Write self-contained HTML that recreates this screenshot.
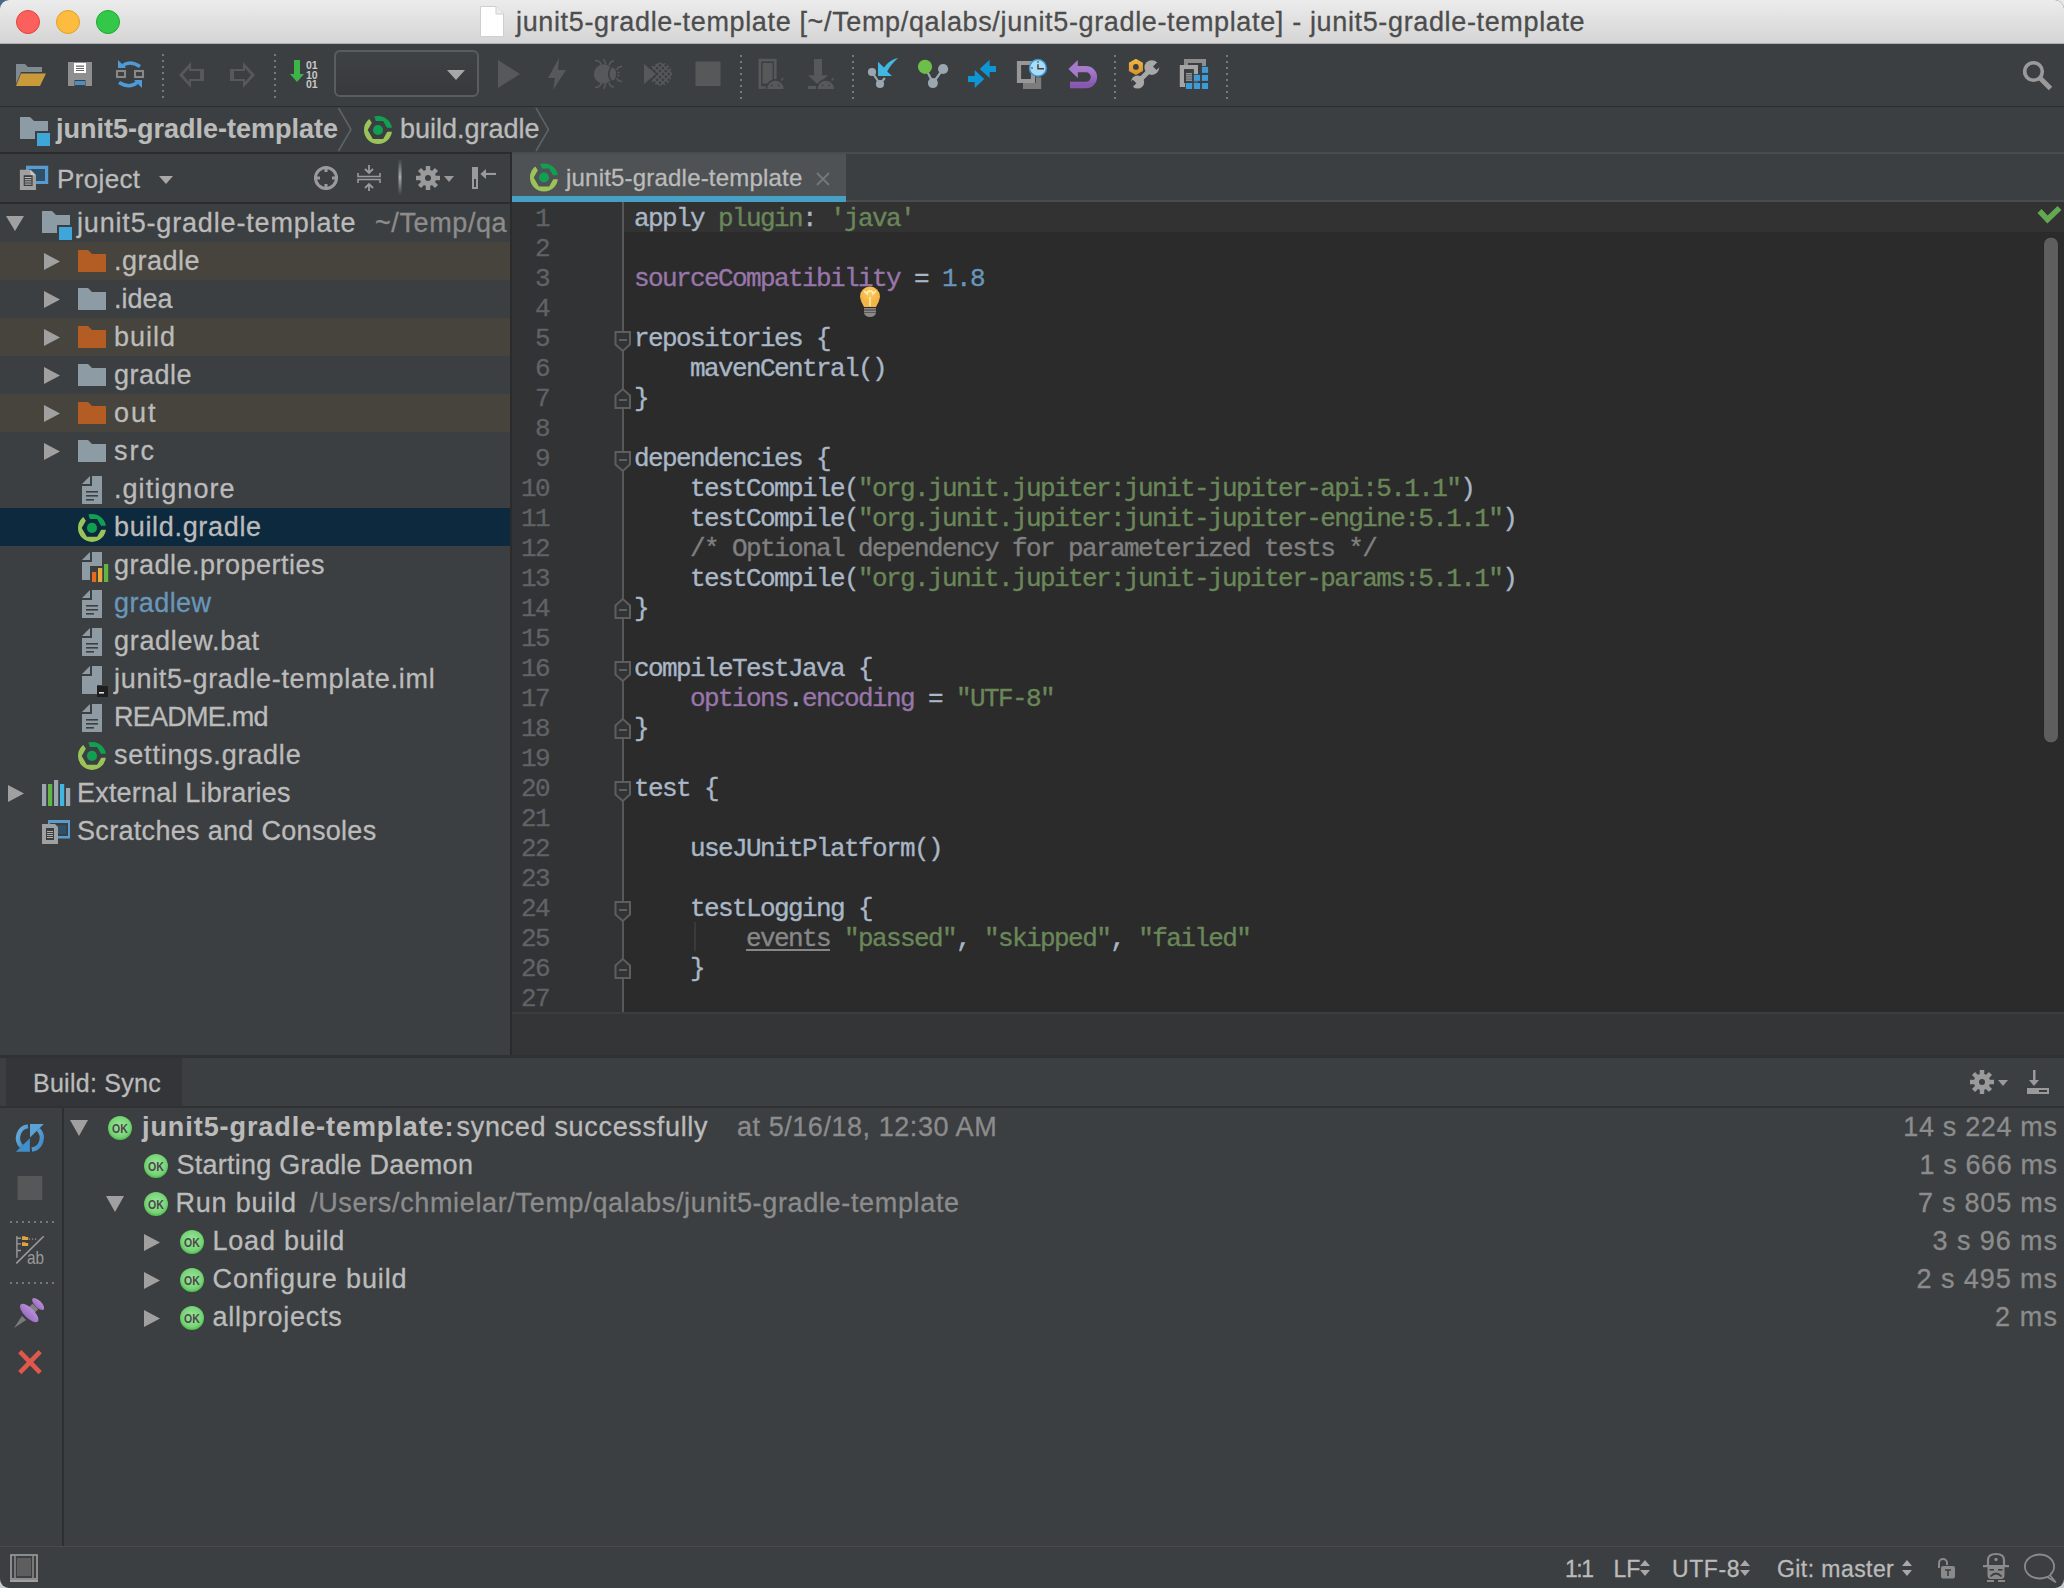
<!DOCTYPE html>
<html><head><meta charset="utf-8"><style>
*{margin:0;padding:0;box-sizing:border-box}
html,body{width:2064px;height:1588px;overflow:hidden;background:#262626}
body{font-family:"Liberation Sans",sans-serif;position:relative}
.a{position:absolute}
.t{position:absolute;white-space:pre;font-size:27px;line-height:38px;color:#bbbbbb;letter-spacing:0.5px;-webkit-text-stroke:0.3px currentColor}
#ov{position:absolute;left:0;top:0;overflow:visible}
.code{position:absolute;font-family:"Liberation Mono",monospace;font-size:26px;letter-spacing:-1.6px;line-height:30px;color:#a9b7c6;white-space:pre;-webkit-text-stroke:0.35px currentColor}
.ln{position:absolute;text-align:right;font-family:"Liberation Mono",monospace;font-size:26px;letter-spacing:-1.6px;line-height:30px;color:#606366;white-space:pre;-webkit-text-stroke:0.3px currentColor}
.s{color:#6a8759}.p{color:#9876aa}.n{color:#6897bb}.c{color:#808080}
.ev{color:#878787;text-decoration:underline;text-decoration-color:#878787;text-underline-offset:3px;text-decoration-thickness:2px}
.dur{position:absolute;white-space:pre;font-size:27px;line-height:38px;color:#8c8c8c;letter-spacing:0.2px;text-align:right;-webkit-text-stroke:0.3px currentColor}
</style></head><body>
<div class="a" style="left:0px;top:0px;width:20px;height:20px;background:#44688e;"></div>
<div class="a" style="left:2044px;top:0px;width:20px;height:20px;background:#e6e6e6;"></div>
<div class="a" style="left:0px;top:1568px;width:20px;height:20px;background:#c6c8ca;"></div>
<div class="a" style="left:2044px;top:1568px;width:20px;height:20px;background:#c6c8ca;"></div>
<div class="a" style="left:0;top:0;width:2064px;height:1588px;background:#3c3f41;border-radius:9px;overflow:hidden">
<div class="a" style="left:0px;top:0px;width:2064px;height:44px;background:linear-gradient(#ececec,#d4d4d4);"></div>
<div class="a" style="left:0px;top:43px;width:2064px;height:1px;background:#b0b0b0;"></div>
<div class="a" style="left:0px;top:106px;width:2064px;height:1px;background:#2b2d2f;"></div>
<div class="a" style="left:0px;top:152px;width:510px;height:2px;background:#2b2b2b;"></div>
<div class="a" style="left:512px;top:152px;width:1552px;height:2px;background:#4a4b4c;"></div>
<div class="a" style="left:0px;top:202px;width:510px;height:2px;background:#2b2b2b;"></div>
<div class="a" style="left:0px;top:242px;width:510px;height:38px;background:#46443c;"></div>
<div class="a" style="left:0px;top:318px;width:510px;height:38px;background:#46443c;"></div>
<div class="a" style="left:0px;top:394px;width:510px;height:38px;background:#46443c;"></div>
<div class="a" style="left:0px;top:508px;width:510px;height:38px;background:#0d293e;"></div>
<div class="a" style="left:510px;top:152px;width:2px;height:904px;background:#2b2b2b;"></div>
<div class="a" style="left:512px;top:154px;width:334px;height:48px;background:#4e5254;"></div>
<div class="a" style="left:512px;top:196px;width:334px;height:6px;background:#46a0c6;"></div>
<div class="a" style="left:846px;top:200px;width:1218px;height:2px;background:#4a4b4c;"></div>
<div class="a" style="left:512px;top:202px;width:1552px;height:810px;background:#2b2b2b;"></div>
<div class="a" style="left:512px;top:202px;width:110px;height:810px;background:#313335;"></div>
<div class="a" style="left:624px;top:202px;width:1440px;height:30px;background:#323232;"></div>
<div class="a" style="left:622px;top:202px;width:2px;height:810px;background:#585858;"></div>
<div class="a" style="left:512px;top:1012px;width:1552px;height:44px;background:#333537;"></div>
<div class="a" style="left:512px;top:1012px;width:1552px;height:2px;background:#3b3d3f;"></div>
<div class="a" style="left:0px;top:1055px;width:2064px;height:3px;background:#2f3133;"></div>
<div class="a" style="left:6px;top:1058px;width:176px;height:48px;background:#333538;"></div>
<div class="a" style="left:0px;top:1106px;width:2064px;height:2px;background:#2f3133;"></div>
<div class="a" style="left:62px;top:1108px;width:2px;height:439px;background:#2d2f31;"></div>
<div class="a" style="left:0px;top:1546px;width:2064px;height:1px;background:#4c4a48;"></div>
</div>
<div class="t" style="left:516px;top:3px;color:#4d4d4d;letter-spacing:0.645px">junit5-gradle-template [~/Temp/qalabs/junit5-gradle-template] - junit5-gradle-template</div>
<div class="t" style="left:56px;top:110px;font-weight:bold;letter-spacing:0;-webkit-text-stroke:0.1px currentColor">junit5-gradle-template</div>
<div class="t" style="left:400px;top:110px;letter-spacing:0">build.gradle</div>
<div class="t" style="left:57px;top:160px;font-size:26px;letter-spacing:0.35px">Project</div>
<div class="t" style="left:77px;top:204px;letter-spacing:0.83px;">junit5-gradle-template</div>
<div class="t" style="left:114px;top:242px;letter-spacing:0.5px;">.gradle</div>
<div class="t" style="left:114px;top:280px;letter-spacing:0.0px;">.idea</div>
<div class="t" style="left:114px;top:318px;letter-spacing:1.0px;">build</div>
<div class="t" style="left:114px;top:356px;letter-spacing:0.5px;">gradle</div>
<div class="t" style="left:114px;top:394px;letter-spacing:2.0px;">out</div>
<div class="t" style="left:114px;top:432px;letter-spacing:2.0px;">src</div>
<div class="t" style="left:114px;top:470px;letter-spacing:1.05px;">.gitignore</div>
<div class="t" style="left:114px;top:508px;letter-spacing:0.68px;">build.gradle</div>
<div class="t" style="left:114px;top:546px;letter-spacing:0.5px;">gradle.properties</div>
<div class="t" style="left:114px;top:584px;letter-spacing:0.4px;color:#6897bb">gradlew</div>
<div class="t" style="left:114px;top:622px;letter-spacing:0.7px;">gradlew.bat</div>
<div class="t" style="left:114px;top:660px;letter-spacing:0.7px;">junit5-gradle-template.iml</div>
<div class="t" style="left:114px;top:698px;letter-spacing:-0.75px;">README.md</div>
<div class="t" style="left:114px;top:736px;letter-spacing:0.79px;">settings.gradle</div>
<div class="t" style="left:77px;top:774px;letter-spacing:0.2px;">External Libraries</div>
<div class="t" style="left:77px;top:812px;letter-spacing:0.31px;">Scratches and Consoles</div>
<div class="t" style="left:375px;top:204px;color:#8c8c8c;letter-spacing:0.6px">~/Temp/qa</div>
<div class="t" style="left:566px;top:159px;font-size:24px;letter-spacing:0.2px">junit5-gradle-template</div>
<div class="t" style="left:33px;top:1064px;font-size:25px;letter-spacing:0.27px">Build: Sync</div>
<div class="t" style="left:142px;top:1108px;font-weight:bold;letter-spacing:0.93px;-webkit-text-stroke:0.1px currentColor">junit5-gradle-template:</div>
<div class="t" style="left:456.5px;top:1108px;letter-spacing:0.69px">synced successfully</div>
<div class="t" style="left:737px;top:1108px;color:#8c8c8c;letter-spacing:0.55px">at 5/16/18, 12:30 AM</div>
<div class="t" style="left:176.5px;top:1146px;letter-spacing:0.25px">Starting Gradle Daemon</div>
<div class="t" style="left:175.5px;top:1184px;letter-spacing:0.8px">Run build</div>
<div class="t" style="left:310px;top:1184px;color:#8c8c8c;letter-spacing:0.66px">/Users/chmielar/Temp/qalabs/junit5-gradle-template</div>
<div class="t" style="left:212.5px;top:1222px;letter-spacing:0.79px">Load build</div>
<div class="t" style="left:212.5px;top:1260px;letter-spacing:0.89px">Configure build</div>
<div class="t" style="left:212.5px;top:1298px;letter-spacing:0.78px">allprojects</div>
<div class="dur" style="right:6.34px;top:1108px;letter-spacing:0.66px">14 s 224 ms</div>
<div class="dur" style="right:6.39px;top:1146px;letter-spacing:0.61px">1 s 666 ms</div>
<div class="dur" style="right:6.22px;top:1184px;letter-spacing:0.78px">7 s 805 ms</div>
<div class="dur" style="right:6.07px;top:1222px;letter-spacing:0.93px">3 s 96 ms</div>
<div class="dur" style="right:6.06px;top:1260px;letter-spacing:0.94px">2 s 495 ms</div>
<div class="dur" style="right:5.83px;top:1298px;letter-spacing:1.17px">2 ms</div>
<div class="t" style="left:1565px;top:1550px;font-size:23px;letter-spacing:-1.5px">1:1</div>
<div class="t" style="left:1613.5px;top:1550px;font-size:23px;letter-spacing:0">LF</div>
<div class="t" style="left:1672px;top:1550px;font-size:23px;letter-spacing:0.6px">UTF-8</div>
<div class="t" style="left:1777px;top:1550px;font-size:23px;letter-spacing:0.43px">Git: master</div>
<div class="code" style="left:634px;top:204px">apply <span class="s">plugin</span>: <span class="s">'java'</span>

<span class="p">sourceCompatibility</span> = <span class="n">1.8</span>

repositories {
    mavenCentral()
}

dependencies {
    testCompile(<span class="s">"org.junit.jupiter:junit-jupiter-api:5.1.1"</span>)
    testCompile(<span class="s">"org.junit.jupiter:junit-jupiter-engine:5.1.1"</span>)
    <span class="c">/* Optional dependency for parameterized tests */</span>
    testCompile(<span class="s">"org.junit.jupiter:junit-jupiter-params:5.1.1"</span>)
}

compileTestJava {
    <span class="p">options</span>.<span class="p">encoding</span> = <span class="s">"UTF-8"</span>
}

test {

    useJUnitPlatform()

    testLogging {
        <span class="ev">events</span> <span class="s">"passed"</span>, <span class="s">"skipped"</span>, <span class="s">"failed"</span>
    }
</div>
<div class="ln" style="left:500px;width:49px;top:204px">1
2
3
4
5
6
7
8
9
10
11
12
13
14
15
16
17
18
19
20
21
22
23
24
25
26
27</div>
<svg id="ov" width="2064" height="1588" viewBox="0 0 2064 1588"><defs>
<radialGradient id="okg" cx="0.5" cy="0.45" r="0.55"><stop offset="0" stop-color="#9ee79e"/><stop offset="0.75" stop-color="#78d478"/><stop offset="1" stop-color="#4fbd4f"/></radialGradient>
<linearGradient id="combog" x1="0" y1="0" x2="0" y2="1"><stop offset="0" stop-color="#3f4244"/><stop offset="1" stop-color="#37393b"/></linearGradient>
<linearGradient id="sepg" x1="0" y1="0" x2="0" y2="1"><stop offset="0" stop-color="#3c3f41"/><stop offset="0.5" stop-color="#a8a8a8"/><stop offset="1" stop-color="#3c3f41"/></linearGradient>
<linearGradient id="revg" x1="0" y1="0" x2="0" y2="1"><stop offset="0" stop-color="#a87ccc"/><stop offset="1" stop-color="#8858b0"/></linearGradient><linearGradient id="nutg" x1="0" y1="0" x2="0" y2="1"><stop offset="0" stop-color="#f0b848"/><stop offset="1" stop-color="#d8922a"/></linearGradient><linearGradient id="refg" x1="0" y1="0" x2="1" y2="1"><stop offset="0" stop-color="#6aaedc"/><stop offset="1" stop-color="#3a86c6"/></linearGradient><linearGradient id="ping" x1="0" y1="0" x2="0" y2="1"><stop offset="0" stop-color="#b88fd6"/><stop offset="1" stop-color="#9c6cc4"/></linearGradient><radialGradient id="bulbg" cx="0.5" cy="0.3" r="0.7"><stop offset="0" stop-color="#fcd060"/><stop offset="1" stop-color="#f0a83a"/></radialGradient>
</defs><path d="M480.5,6.5 H496 L503.5,14 V36.5 H480.5 Z" fill="#fff" stroke="#cfcfcf" stroke-width="1"/><path d="M496,6.5 V14 H503.5" fill="#eee" stroke="#cfcfcf" stroke-width="1"/><circle cx="28" cy="22" r="11.5" fill="#fc605c" stroke="#e0443e" stroke-width="1"/><circle cx="68" cy="22" r="11.5" fill="#fdbc40" stroke="#dea123" stroke-width="1"/><circle cx="108" cy="22" r="11.5" fill="#34c84a" stroke="#1aab29" stroke-width="1"/><path d="M16,64 H25 L28,67 H42 V72 H21 L16,84 Z" fill="#7f8b91"/><path d="M21,73.5 H46 L40,86 H16 Z" fill="#c99a3a"/><rect x="68" y="62" width="24" height="24" fill="#8f8f8f"/><rect x="74" y="63" width="12" height="10" fill="#ffffff"/><rect x="76" y="65.5" width="8" height="1.3" fill="#666"/><rect x="76" y="68" width="8" height="1" fill="#666"/><rect x="76" y="70" width="8" height="1" fill="#666"/><rect x="74.5" y="80" width="11" height="6" fill="#3c3f41"/><rect x="75" y="81" width="10" height="4" fill="#4a90c8"/><rect x="117" y="71" width="8" height="6" fill="none" stroke="#888" stroke-width="2.1"/><rect x="135" y="71" width="8" height="6" fill="none" stroke="#888" stroke-width="2.1"/><path d="M123,65.5 Q130,60 140,66.5" fill="none" stroke="#4f9ad8" stroke-width="3.6"/><path d="M118,60 V68 H126 Z" fill="#4f9ad8"/><path d="M119,82.5 Q130,89 137,82.5" fill="none" stroke="#4f9ad8" stroke-width="3.6"/><path d="M142,88 V80 H134 Z" fill="#4f9ad8"/><rect x="162" y="54" width="2" height="2" fill="#76787a"/><rect x="162" y="60" width="2" height="2" fill="#76787a"/><rect x="162" y="66" width="2" height="2" fill="#76787a"/><rect x="162" y="72" width="2" height="2" fill="#76787a"/><rect x="162" y="78" width="2" height="2" fill="#76787a"/><rect x="162" y="84" width="2" height="2" fill="#76787a"/><rect x="162" y="90" width="2" height="2" fill="#76787a"/><rect x="162" y="96" width="2" height="2" fill="#76787a"/><path d="M191,62 L179,75 L191,88 V81 H204 V69 H191 Z M189,68 V71 H200 V79 H189 V82 L183,75 Z" fill="#565859" fill-rule="evenodd"/><path d="M243,62 L255,75 L243,88 V81 H230 V69 H243 Z M245,68 V71 H234 V79 H245 V82 L251,75 Z" fill="#565859" fill-rule="evenodd"/><rect x="274" y="54" width="2" height="2" fill="#76787a"/><rect x="274" y="60" width="2" height="2" fill="#76787a"/><rect x="274" y="66" width="2" height="2" fill="#76787a"/><rect x="274" y="72" width="2" height="2" fill="#76787a"/><rect x="274" y="78" width="2" height="2" fill="#76787a"/><rect x="274" y="84" width="2" height="2" fill="#76787a"/><rect x="274" y="90" width="2" height="2" fill="#76787a"/><rect x="274" y="96" width="2" height="2" fill="#76787a"/><rect x="294" y="60" width="6" height="14" fill="#3cb44a"/><path d="M290,74 H304 L297,82 Z" fill="#3cb44a"/><text font-family="Liberation Sans" font-weight="bold" font-size="10.5" fill="#c8c8c8"><tspan x="306" y="69">01</tspan><tspan x="306" y="79">10</tspan><tspan x="306" y="88">01</tspan></text><rect x="335" y="51" width="143" height="45" rx="5" fill="url(#combog)" stroke="#5a5d5f" stroke-width="2"/><path d="M447,70 H465 L456,80 Z" fill="#a8a8a8"/><path d="M498,60 L520,74 L498,88 Z" fill="#565859"/><path d="M559,58 L548,78 H555 L553,90 L566,70 H558 Z" fill="#565859"/><circle cx="603.5" cy="74" r="9.7" fill="#565859"/><ellipse cx="612.5" cy="74" rx="4.6" ry="7.6" fill="#3c3f41"/><ellipse cx="612.9" cy="74" rx="3.2" ry="6.3" fill="#565859"/><path d="M595,60.5 Q600,60.5 601.5,65 M603.5,59 L606,64.5 M614,61 Q610,61 609,65.5 M595,87.5 Q600,87.5 601.5,83 M603.5,89 L606,83.5 M614,87 Q610,87 609,82.5 M622,66.5 Q617.5,66.5 617,70 M622,81.5 Q617.5,81.5 617,78 M617.5,72.5 H619.5 M617.5,75.5 H619.5" stroke="#565859" stroke-width="1.7" fill="none"/><path d="M644,64 L655.2,74 L644,84 Z" fill="#565859"/><clipPath id="covc"><circle cx="660.5" cy="74" r="11.5"/></clipPath><g clip-path="url(#covc)" stroke="#565859" stroke-width="1.6"><path d="M613.2,62 L637.2,86 M637.2,62 L613.2,86"/><path d="M619.0,62 L643.0,86 M643.0,62 L619.0,86"/><path d="M624.8,62 L648.8,86 M648.8,62 L624.8,86"/><path d="M630.6,62 L654.6,86 M654.6,62 L630.6,86"/><path d="M636.4,62 L660.4,86 M660.4,62 L636.4,86"/><path d="M642.2,62 L666.2,86 M666.2,62 L642.2,86"/><path d="M648.0,62 L672.0,86 M672.0,62 L648.0,86"/><path d="M653.8,62 L677.8,86 M677.8,62 L653.8,86"/><path d="M659.6,62 L683.6,86 M683.6,62 L659.6,86"/><path d="M665.4,62 L689.4,86 M689.4,62 L665.4,86"/><path d="M671.2,62 L695.2,86 M695.2,62 L671.2,86"/><path d="M677.0,62 L701.0,86 M701.0,62 L677.0,86"/><path d="M682.8,62 L706.8,86 M706.8,62 L682.8,86"/></g><path d="M644,62 L657,74 L644,86" fill="none" stroke="#3c3f41" stroke-width="1.5"/><path d="M644,64 L655.2,74 L644,84 Z" fill="#565859"/><rect x="695.5" y="61.5" width="25" height="24.5" fill="#565859"/><rect x="740" y="55" width="2" height="2" fill="#76787a"/><rect x="740" y="61" width="2" height="2" fill="#76787a"/><rect x="740" y="67" width="2" height="2" fill="#76787a"/><rect x="740" y="73" width="2" height="2" fill="#76787a"/><rect x="740" y="79" width="2" height="2" fill="#76787a"/><rect x="740" y="85" width="2" height="2" fill="#76787a"/><rect x="740" y="91" width="2" height="2" fill="#76787a"/><rect x="740" y="97" width="2" height="2" fill="#76787a"/><rect x="759.8" y="60.1" width="15.5" height="27.5" fill="none" stroke="#565859" stroke-width="2.6"/><rect x="762.6" y="63" width="10" height="20.5" fill="#565859"/><path d="M765.5,89 A9.9,9.9 0 0 1 785.3,89 Z" fill="#3c3f41"/><path d="M767.2,89 A8.2,8.2 0 0 1 783.6,89 Z" fill="#565859"/><path d="M769.5,80.5 L767.5,78 M781.2,80.5 L783.2,78" stroke="#565859" stroke-width="1.5"/><circle cx="772.2" cy="85.4" r="0.8" fill="#3c3f41"/><circle cx="778.7" cy="85.4" r="0.8" fill="#3c3f41"/><rect x="814" y="59" width="8" height="16.5" fill="#565859"/><path d="M807.8,75.2 H827.8 L818,84.5 Z" fill="#565859"/><rect x="807.8" y="86" width="8.2" height="3" fill="#565859"/><path d="M815.9,89 A9.9,9.9 0 0 1 835.7,89 Z" fill="#3c3f41"/><path d="M817.6,89 A8.2,8.2 0 0 1 834,89 Z" fill="#565859"/><path d="M819.9,80.5 L817.9,78 M831.6,80.5 L833.6,78" stroke="#565859" stroke-width="1.5"/><circle cx="822.6" cy="85.4" r="0.8" fill="#3c3f41"/><circle cx="829.1" cy="85.4" r="0.8" fill="#3c3f41"/><rect x="852" y="55" width="2" height="2" fill="#76787a"/><rect x="852" y="61" width="2" height="2" fill="#76787a"/><rect x="852" y="67" width="2" height="2" fill="#76787a"/><rect x="852" y="73" width="2" height="2" fill="#76787a"/><rect x="852" y="79" width="2" height="2" fill="#76787a"/><rect x="852" y="85" width="2" height="2" fill="#76787a"/><rect x="852" y="91" width="2" height="2" fill="#76787a"/><rect x="852" y="97" width="2" height="2" fill="#76787a"/><path d="M872,72 L880,84 L884.8,78" stroke="#9aa7b0" stroke-width="2.2" fill="none"/><circle cx="872" cy="72" r="4.1" fill="#9aa7b0"/><circle cx="880" cy="84" r="4.1" fill="#9aa7b0"/><path d="M878,61.8 L884,67.6 C888,62.5 892,59 898,58 C893.5,62 889.5,67 887.2,71.6 L892,76.1 L878,76.1 Z" fill="#40b6e0"/><path d="M925,67 L933,83 L943,69" stroke="#9aa7b0" stroke-width="2.2" fill="none"/><circle cx="925" cy="66.8" r="7.1" fill="#6cc04a"/><circle cx="943.1" cy="69" r="5.1" fill="#9aa7b0"/><circle cx="932.9" cy="83.1" r="5" fill="#9aa7b0"/><path d="M968,76.1 H974.7 V70 L984.2,79 L974.7,88 V81.9 H968 Z" fill="#0e96d4"/><path d="M996,65.9 H989.6 V59.8 L979.7,69 L989.6,78.1 V72 H996 Z" fill="#0e96d4"/><path d="M1023,83 V89 H1041.2 V77.3 H1036 V83 Z" fill="#7c7c7c"/><path d="M1016.9,61 H1035.1 V83 H1016.9 Z M1021.1,65.1 V78.9 H1030.9 V65.1 Z" fill="#989898" fill-rule="evenodd"/><circle cx="1037.9" cy="67.9" r="8.4" fill="#a9dcf7" stroke="#3e96cf" stroke-width="1.5"/><path d="M1038,64.3 V68.7 H1044" stroke="#4a3f3a" stroke-width="1.5" fill="none"/><rect x="1037.3" y="61.3" width="1.4" height="1.4" fill="#4a3f3a"/><rect x="1031.3" y="67.3" width="1.4" height="1.4" fill="#4a3f3a"/><path d="M1077,69.1 H1086 A7.95,7.95 0 0 1 1086,85 H1070" fill="none" stroke="url(#revg)" stroke-width="6.3"/><path d="M1068.4,69 L1077.8,60.1 V78 Z" fill="#a57acb"/><rect x="1114" y="55" width="2" height="2" fill="#76787a"/><rect x="1114" y="61" width="2" height="2" fill="#76787a"/><rect x="1114" y="67" width="2" height="2" fill="#76787a"/><rect x="1114" y="73" width="2" height="2" fill="#76787a"/><rect x="1114" y="79" width="2" height="2" fill="#76787a"/><rect x="1114" y="85" width="2" height="2" fill="#76787a"/><rect x="1114" y="91" width="2" height="2" fill="#76787a"/><rect x="1114" y="97" width="2" height="2" fill="#76787a"/><path d="M1139,81 L1151,69" stroke="#a8a8a8" stroke-width="4.6"/><circle cx="1151.8" cy="67.6" r="7.4" fill="#a8a8a8"/><circle cx="1137.6" cy="82" r="6.6" fill="#a8a8a8"/><path d="M1153,66.4 L1159.5,59.9 L1163,63.4 L1156.5,69.9 Z" fill="#3c3f41" transform="rotate(0)"/><path d="M1136.4,83.2 L1129.9,89.7 L1126.4,86.2 L1132.9,79.7 Z" fill="#3c3f41"/><path d="M1151,61 L1157.5,67.5" stroke="#a8a8a8" stroke-width="0"/><polygon points="1135.9,58.8 1142.9,62.85 1142.9,70.95 1135.9,75 1128.9,70.95 1128.9,62.85" fill="url(#nutg)"/><circle cx="1135.9" cy="66.9" r="2.9" fill="#3c3f41"/><path d="M1184,59 H1206 V67 H1202 V63 H1188 V65 H1184 Z" fill="#8e8e8e"/><path d="M1179.8,65 H1198 V87.1 H1179.8 Z M1184,69.2 V82.9 H1193.8 V69.2 Z" fill="#a5a5a5" fill-rule="evenodd"/><rect x="1184.2" y="69.2" width="9.4" height="13.3" fill="#3c3f41"/><rect x="1186" y="73.3" width="6" height="1" fill="#c0c0c0"/><rect x="1186" y="75.4" width="6" height="1" fill="#c0c0c0"/><rect x="1186" y="77.5" width="6" height="1" fill="#c0c0c0"/><rect x="1186" y="79.6" width="6" height="1" fill="#c0c0c0"/><rect x="1201.1000000000001" y="66.10000000000001" width="7.8" height="7.6" fill="#3c3f41"/><rect x="1201.9" y="66.9" width="6.2" height="6" fill="#3e9bd8"/><rect x="1193.1000000000001" y="74.10000000000001" width="7.8" height="7.6" fill="#3c3f41"/><rect x="1193.9" y="74.9" width="6.2" height="6" fill="#3e9bd8"/><rect x="1201.1000000000001" y="74.10000000000001" width="7.8" height="7.6" fill="#3c3f41"/><rect x="1201.9" y="74.9" width="6.2" height="6" fill="#3e9bd8"/><rect x="1185.1000000000001" y="82.2" width="7.8" height="7.6" fill="#3c3f41"/><rect x="1185.9" y="83" width="6.2" height="6" fill="#3e9bd8"/><rect x="1193.1000000000001" y="82.2" width="7.8" height="7.6" fill="#3c3f41"/><rect x="1193.9" y="83" width="6.2" height="6" fill="#3e9bd8"/><rect x="1201.1000000000001" y="82.2" width="7.8" height="7.6" fill="#3c3f41"/><rect x="1201.9" y="83" width="6.2" height="6" fill="#3e9bd8"/><rect x="1226" y="55" width="2" height="2" fill="#76787a"/><rect x="1226" y="61" width="2" height="2" fill="#76787a"/><rect x="1226" y="67" width="2" height="2" fill="#76787a"/><rect x="1226" y="73" width="2" height="2" fill="#76787a"/><rect x="1226" y="79" width="2" height="2" fill="#76787a"/><rect x="1226" y="85" width="2" height="2" fill="#76787a"/><rect x="1226" y="91" width="2" height="2" fill="#76787a"/><rect x="1226" y="97" width="2" height="2" fill="#76787a"/><circle cx="2033.5" cy="71.5" r="8.8" fill="none" stroke="#9a9a9a" stroke-width="3.6"/><path d="M2040,78 L2050.5,88.5" stroke="#9a9a9a" stroke-width="5"/><path d="M20,117 H30 L34,121 H48 V139 H20 Z" fill="#8d9ba4"/><rect x="35" y="131" width="15" height="15" fill="#3c3f41"/><rect x="37" y="133" width="13" height="13" fill="#3ea6d9"/><path d="M338.5,108 L351,129.5 L338.5,151" fill="none" stroke="#5f6264" stroke-width="1.6"/><clipPath id="gcl1"><path d="M364,130 A14,14 0 1 0 392,130 A14,14 0 1 0 364,130 Z M388.30,130.00 L383.15,138.92 L372.85,138.92 L367.70,130.00 L372.85,121.08 L383.15,121.08 Z" clip-rule="evenodd"/></clipPath><g clip-path="url(#gcl1)"><polygon points="378.00,127.85 371.94,108.85 378.00,108.00 393.56,114.44 399.67,126.18 400.00,127.85" fill="#11a052"/><polygon points="378.00,131.80 400.00,131.80 393.56,145.56 378.00,152.00 362.44,145.56 356.00,130.00 364.76,112.43" fill="#9ac45a"/></g><circle cx="378" cy="130" r="5.03" fill="#11a052"/><path d="M536,108 L548.5,129.5 L536,151" fill="none" stroke="#5f6264" stroke-width="1.6"/><rect x="26" y="165.7" width="22.2" height="18.3" fill="#5a9bcf"/><rect x="29" y="169" width="16" height="12" fill="#2e5068"/><path d="M19.9,169.8 H30.5 L36,175.3 V190.1 H19.9 Z" fill="#a0a0a0"/><path d="M30.5,169.8 V175.3 H36" fill="#c8c8c8"/><rect x="23.7" y="175.2" width="8.9" height="10.8" fill="#3c3f41"/><rect x="24.8" y="177" width="6.7" height="1" fill="#bdbdbd"/><rect x="24.8" y="179.2" width="6.7" height="1" fill="#bdbdbd"/><rect x="24.8" y="181.4" width="6.7" height="1" fill="#bdbdbd"/><rect x="24.8" y="183.6" width="6.7" height="1" fill="#bdbdbd"/><path d="M159,176 H173 L166,184 Z" fill="#a8a8a8"/><circle cx="326" cy="178" r="10.5" fill="none" stroke="#9a9a9a" stroke-width="3"/><rect x="324.5" y="166" width="3" height="6" fill="#9a9a9a"/><rect x="324.5" y="184" width="3" height="6" fill="#9a9a9a"/><rect x="314" y="176.5" width="6" height="3" fill="#9a9a9a"/><rect x="332" y="176.5" width="6" height="3" fill="#9a9a9a"/><path d="M358,173 V176.5 H380 V173 M358,183 V179.5 H380 V183" fill="none" stroke="#9a9a9a" stroke-width="1.6"/><path d="M369,165 V172 M365,169 L369,173 L373,169 M369,191 V184 M365,188 L369,184 L373,188" fill="none" stroke="#9a9a9a" stroke-width="1.8"/><rect x="398.5" y="159" width="3" height="36" fill="url(#sepg)"/><rect x="425.8" y="166" width="4.4" height="12" fill="#9a9a9a" transform="rotate(0 428 178)"/><rect x="425.8" y="166" width="4.4" height="12" fill="#9a9a9a" transform="rotate(45 428 178)"/><rect x="425.8" y="166" width="4.4" height="12" fill="#9a9a9a" transform="rotate(90 428 178)"/><rect x="425.8" y="166" width="4.4" height="12" fill="#9a9a9a" transform="rotate(135 428 178)"/><rect x="425.8" y="166" width="4.4" height="12" fill="#9a9a9a" transform="rotate(180 428 178)"/><rect x="425.8" y="166" width="4.4" height="12" fill="#9a9a9a" transform="rotate(225 428 178)"/><rect x="425.8" y="166" width="4.4" height="12" fill="#9a9a9a" transform="rotate(270 428 178)"/><rect x="425.8" y="166" width="4.4" height="12" fill="#9a9a9a" transform="rotate(315 428 178)"/><circle cx="428" cy="178" r="8.16" fill="#9a9a9a"/><circle cx="428" cy="178" r="3.0" fill="#3c3f41"/><path d="M444,176 H454 L449,182 Z" fill="#9a9a9a"/><rect x="472" y="167" width="6" height="22" fill="#9a9a9a"/><rect x="474" y="179" width="2" height="8" fill="#3c3f41"/><path d="M480.4,173.9 L486,168.9 V179 Z" fill="#9a9a9a"/><rect x="485" y="172.9" width="11" height="2.1" fill="#9a9a9a"/><path d="M6,216 H24 L15.0,231 Z" fill="#a0a0a0"/><path d="M42,211 H52 L56,215 H70 V233 H42 Z" fill="#8d9ba4"/><rect x="57" y="225" width="15" height="15" fill="#3c3f41"/><rect x="59" y="227" width="13" height="13" fill="#3ea6d9"/><path d="M44,253 L60,261.5 L44,270 Z" fill="#a0a0a0"/><path d="M78,250 H88 L92,254 H106 V272 H78 Z" fill="#b35c24"/><path d="M44,291 L60,299.5 L44,308 Z" fill="#a0a0a0"/><path d="M78,288 H88 L92,292 H106 V310 H78 Z" fill="#8d9ba4"/><path d="M44,329 L60,337.5 L44,346 Z" fill="#a0a0a0"/><path d="M78,326 H88 L92,330 H106 V348 H78 Z" fill="#b35c24"/><path d="M44,367 L60,375.5 L44,384 Z" fill="#a0a0a0"/><path d="M78,364 H88 L92,368 H106 V386 H78 Z" fill="#8d9ba4"/><path d="M44,405 L60,413.5 L44,422 Z" fill="#a0a0a0"/><path d="M78,402 H88 L92,406 H106 V424 H78 Z" fill="#b35c24"/><path d="M44,443 L60,451.5 L44,460 Z" fill="#a0a0a0"/><path d="M78,440 H88 L92,444 H106 V462 H78 Z" fill="#8d9ba4"/><path d="M92,476 H102 V504 H82 V486 H92 Z" fill="#8f9ba3"/><path d="M82,484 L90,476 V484 Z" fill="#8f9ba3"/><rect x="86" y="491" width="12" height="1.6" fill="#3c3f41"/><rect x="86" y="495" width="12" height="1.6" fill="#3c3f41"/><rect x="86" y="499" width="8" height="1.6" fill="#3c3f41"/><clipPath id="gcl2"><path d="M78,527.9 A14,14 0 1 0 106,527.9 A14,14 0 1 0 78,527.9 Z M102.30,527.90 L97.15,536.82 L86.85,536.82 L81.70,527.90 L86.85,518.98 L97.15,518.98 Z" clip-rule="evenodd"/></clipPath><g clip-path="url(#gcl2)"><polygon points="92.00,525.75 85.94,506.75 92.00,505.90 107.56,512.34 113.67,524.08 114.00,525.75" fill="#11a052"/><polygon points="92.00,529.70 114.00,529.70 107.56,543.46 92.00,549.90 76.44,543.46 70.00,527.90 78.76,510.33" fill="#9ac45a"/></g><circle cx="92" cy="527.9" r="5.03" fill="#11a052"/><path d="M92,552 H102 V566 H90 V580 H82 V562 H92 Z" fill="#8f9ba3"/><path d="M82,560 L90,552 V560 Z" fill="#8f9ba3"/><rect x="92" y="572" width="4.2" height="10" fill="#e46c1c"/><rect x="98" y="568" width="4.2" height="14" fill="#e8a838"/><rect x="104" y="564" width="4.2" height="18" fill="#62b543"/><path d="M92,590 H102 V618 H82 V600 H92 Z" fill="#8f9ba3"/><path d="M82,598 L90,590 V598 Z" fill="#8f9ba3"/><rect x="86" y="605" width="12" height="1.6" fill="#3c3f41"/><rect x="86" y="609" width="12" height="1.6" fill="#3c3f41"/><rect x="86" y="613" width="8" height="1.6" fill="#3c3f41"/><path d="M92,628 H102 V656 H82 V638 H92 Z" fill="#8f9ba3"/><path d="M82,636 L90,628 V636 Z" fill="#8f9ba3"/><rect x="86" y="643" width="12" height="1.6" fill="#3c3f41"/><rect x="86" y="647" width="12" height="1.6" fill="#3c3f41"/><rect x="86" y="651" width="8" height="1.6" fill="#3c3f41"/><path d="M92,666 H102 V685 H97 V694 H82 V676 H92 Z" fill="#8f9ba3"/><path d="M82,674 L90,666 V674 Z" fill="#8f9ba3"/><rect x="97" y="686" width="11" height="11" fill="#1e1e1e"/><rect x="99" y="692" width="5" height="1.6" fill="#ddd"/><path d="M92,704 H102 V732 H82 V714 H92 Z" fill="#8f9ba3"/><path d="M82,712 L90,704 V712 Z" fill="#8f9ba3"/><rect x="86" y="719" width="12" height="1.6" fill="#3c3f41"/><rect x="86" y="723" width="12" height="1.6" fill="#3c3f41"/><rect x="86" y="727" width="8" height="1.6" fill="#3c3f41"/><clipPath id="gcl3"><path d="M78,755.9 A14,14 0 1 0 106,755.9 A14,14 0 1 0 78,755.9 Z M102.30,755.90 L97.15,764.82 L86.85,764.82 L81.70,755.90 L86.85,746.98 L97.15,746.98 Z" clip-rule="evenodd"/></clipPath><g clip-path="url(#gcl3)"><polygon points="92.00,753.75 85.94,734.75 92.00,733.90 107.56,740.34 113.67,752.08 114.00,753.75" fill="#11a052"/><polygon points="92.00,757.70 114.00,757.70 107.56,771.46 92.00,777.90 76.44,771.46 70.00,755.90 78.76,738.33" fill="#9ac45a"/></g><circle cx="92" cy="755.9" r="5.03" fill="#11a052"/><path d="M8,785 L24,793.5 L8,802 Z" fill="#a0a0a0"/><rect x="42" y="784" width="4.2" height="22" fill="#9aa7b0"/><rect x="48" y="784" width="4.2" height="22" fill="#62b543"/><rect x="54" y="780" width="4.2" height="26" fill="#9aa7b0"/><rect x="60" y="784" width="4.2" height="22" fill="#40b6e0"/><rect x="66" y="788" width="4.2" height="18" fill="#9aa7b0"/><rect x="48" y="820" width="22" height="18.5" fill="#5a9bcf"/><rect x="50" y="823" width="18" height="13" fill="#3c3f41"/><rect x="58" y="825.5" width="8" height="8.5" fill="#2e5068"/><path d="M42,824 H55 L58,827 V844 H42 Z" fill="#a0a0a0"/><rect x="46" y="828" width="8" height="12" fill="#3c3f41"/><rect x="47" y="831" width="6" height="0.9" fill="#bbb"/><rect x="47" y="833" width="6" height="0.9" fill="#bbb"/><rect x="47" y="835" width="6" height="0.9" fill="#bbb"/><rect x="47" y="837" width="6" height="0.9" fill="#bbb"/><clipPath id="gcl4"><path d="M530,177.5 A14,14 0 1 0 558,177.5 A14,14 0 1 0 530,177.5 Z M554.30,177.50 L549.15,186.42 L538.85,186.42 L533.70,177.50 L538.85,168.58 L549.15,168.58 Z" clip-rule="evenodd"/></clipPath><g clip-path="url(#gcl4)"><polygon points="544.00,175.35 537.94,156.35 544.00,155.50 559.56,161.94 565.67,173.68 566.00,175.35" fill="#11a052"/><polygon points="544.00,179.30 566.00,179.30 559.56,193.06 544.00,199.50 528.44,193.06 522.00,177.50 530.76,159.93" fill="#9ac45a"/></g><circle cx="544" cy="177.5" r="5.03" fill="#11a052"/><path d="M817,173 L829,185 M829,173 L817,185" stroke="#75787a" stroke-width="1.8"/><path d="M615.5,332 H630 V344.5 L622.8,351 L615.5,344.5 Z" fill="#313335" stroke="#5e5e5e" stroke-width="2"/><rect x="619" y="339" width="8" height="2" fill="#5e5e5e"/><path d="M615.5,452 H630 V464.5 L622.8,471 L615.5,464.5 Z" fill="#313335" stroke="#5e5e5e" stroke-width="2"/><rect x="619" y="459" width="8" height="2" fill="#5e5e5e"/><path d="M615.5,662 H630 V674.5 L622.8,681 L615.5,674.5 Z" fill="#313335" stroke="#5e5e5e" stroke-width="2"/><rect x="619" y="669" width="8" height="2" fill="#5e5e5e"/><path d="M615.5,782 H630 V794.5 L622.8,801 L615.5,794.5 Z" fill="#313335" stroke="#5e5e5e" stroke-width="2"/><rect x="619" y="789" width="8" height="2" fill="#5e5e5e"/><path d="M615.5,902 H630 V914.5 L622.8,921 L615.5,914.5 Z" fill="#313335" stroke="#5e5e5e" stroke-width="2"/><rect x="619" y="909" width="8" height="2" fill="#5e5e5e"/><path d="M615.5,408 H630 V395.5 L622.8,389 L615.5,395.5 Z" fill="#313335" stroke="#5e5e5e" stroke-width="2"/><rect x="619" y="399" width="8" height="2" fill="#5e5e5e"/><path d="M615.5,618 H630 V605.5 L622.8,599 L615.5,605.5 Z" fill="#313335" stroke="#5e5e5e" stroke-width="2"/><rect x="619" y="609" width="8" height="2" fill="#5e5e5e"/><path d="M615.5,738 H630 V725.5 L622.8,719 L615.5,725.5 Z" fill="#313335" stroke="#5e5e5e" stroke-width="2"/><rect x="619" y="729" width="8" height="2" fill="#5e5e5e"/><path d="M615.5,978 H630 V965.5 L622.8,959 L615.5,965.5 Z" fill="#313335" stroke="#5e5e5e" stroke-width="2"/><rect x="619" y="969" width="8" height="2" fill="#5e5e5e"/><rect x="694" y="922" width="2" height="29.5" fill="#3a3a3a"/><circle cx="870" cy="296.5" r="10" fill="url(#bulbg)"/><path d="M861,301 L864,307 H876 L879,301 Z" fill="#f3b544"/><path d="M864,291 L867,294 A3,3 0 1 1 873,294 L876,291 M870,297 V306" stroke="#fff3c0" stroke-width="1.3" fill="none"/><rect x="864" y="308" width="12" height="1.6" fill="#8a8a8a"/><rect x="864" y="310.4" width="12" height="1.6" fill="#8a8a8a"/><path d="M864,312.5 H876 A6,4.5 0 0 1 864,312.5 Z" fill="#8a8a8a"/><path d="M2039.5,211 L2047.5,219.5 L2059.5,208" fill="none" stroke="#62a850" stroke-width="5.6" stroke-linejoin="miter"/><rect x="2043.5" y="237" width="15" height="506" rx="7.5" fill="#5e5e5e" stroke="#262626" stroke-width="1"/><rect x="1979.8" y="1070" width="4.4" height="12" fill="#9a9a9a" transform="rotate(0 1982 1082)"/><rect x="1979.8" y="1070" width="4.4" height="12" fill="#9a9a9a" transform="rotate(45 1982 1082)"/><rect x="1979.8" y="1070" width="4.4" height="12" fill="#9a9a9a" transform="rotate(90 1982 1082)"/><rect x="1979.8" y="1070" width="4.4" height="12" fill="#9a9a9a" transform="rotate(135 1982 1082)"/><rect x="1979.8" y="1070" width="4.4" height="12" fill="#9a9a9a" transform="rotate(180 1982 1082)"/><rect x="1979.8" y="1070" width="4.4" height="12" fill="#9a9a9a" transform="rotate(225 1982 1082)"/><rect x="1979.8" y="1070" width="4.4" height="12" fill="#9a9a9a" transform="rotate(270 1982 1082)"/><rect x="1979.8" y="1070" width="4.4" height="12" fill="#9a9a9a" transform="rotate(315 1982 1082)"/><circle cx="1982" cy="1082" r="8.16" fill="#9a9a9a"/><circle cx="1982" cy="1082" r="3.0" fill="#3c3f41"/><path d="M1998,1080 H2008 L2003,1086 Z" fill="#9a9a9a"/><rect x="2033" y="1070" width="2.5" height="12" fill="#9a9a9a"/><path d="M2029,1080 H2039 L2034,1086 Z" fill="#9a9a9a"/><rect x="2027" y="1088" width="22" height="6" fill="#9a9a9a"/><rect x="2039" y="1090" width="8" height="2" fill="#3c3f41"/><path d="M70,1120 H88 L79.0,1136 Z" fill="#a0a0a0"/><circle cx="120" cy="1128" r="12" fill="url(#okg)"/><text x="112.1" y="1132.6" font-family="Liberation Sans" font-weight="bold" font-size="13" fill="#4a4a4a" textLength="15.8" lengthAdjust="spacingAndGlyphs">OK</text><circle cx="156" cy="1166" r="12" fill="url(#okg)"/><text x="148.1" y="1170.6" font-family="Liberation Sans" font-weight="bold" font-size="13" fill="#4a4a4a" textLength="15.8" lengthAdjust="spacingAndGlyphs">OK</text><path d="M106,1196 H124 L115.0,1212 Z" fill="#a0a0a0"/><circle cx="156" cy="1204" r="12" fill="url(#okg)"/><text x="148.1" y="1208.6" font-family="Liberation Sans" font-weight="bold" font-size="13" fill="#4a4a4a" textLength="15.8" lengthAdjust="spacingAndGlyphs">OK</text><path d="M144,1234 L160,1242.5 L144,1251 Z" fill="#a0a0a0"/><circle cx="192" cy="1242" r="12" fill="url(#okg)"/><text x="184.1" y="1246.6" font-family="Liberation Sans" font-weight="bold" font-size="13" fill="#4a4a4a" textLength="15.8" lengthAdjust="spacingAndGlyphs">OK</text><path d="M144,1272 L160,1280.5 L144,1289 Z" fill="#a0a0a0"/><circle cx="192" cy="1280" r="12" fill="url(#okg)"/><text x="184.1" y="1284.6" font-family="Liberation Sans" font-weight="bold" font-size="13" fill="#4a4a4a" textLength="15.8" lengthAdjust="spacingAndGlyphs">OK</text><path d="M144,1310 L160,1318.5 L144,1327 Z" fill="#a0a0a0"/><circle cx="192" cy="1318" r="12" fill="url(#okg)"/><text x="184.1" y="1322.6" font-family="Liberation Sans" font-weight="bold" font-size="13" fill="#4a4a4a" textLength="15.8" lengthAdjust="spacingAndGlyphs">OK</text><path d="M28.04,1126.25 A11.9,11.9 0 0 0 21.49,1146.41" fill="none" stroke="url(#refg)" stroke-width="4.3"/><path d="M15.9,1151.8 H29.9 V1138.2 Z" fill="#3f8fcc"/><path d="M31.9,1149.73 A11.9,11.9 0 0 0 38.31,1129.59" fill="none" stroke="url(#refg)" stroke-width="4.3"/><path d="M30,1124 H43.8 L30,1137.6 Z" fill="#5aa3d6"/><rect x="17.6" y="1176" width="24.7" height="24" fill="#555759"/><rect x="10" y="1221" width="2" height="2" fill="#76787a"/><rect x="16" y="1221" width="2" height="2" fill="#76787a"/><rect x="22" y="1221" width="2" height="2" fill="#76787a"/><rect x="28" y="1221" width="2" height="2" fill="#76787a"/><rect x="34" y="1221" width="2" height="2" fill="#76787a"/><rect x="40" y="1221" width="2" height="2" fill="#76787a"/><rect x="46" y="1221" width="2" height="2" fill="#76787a"/><rect x="52" y="1221" width="2" height="2" fill="#76787a"/><path d="M16.3,1263.4 L43.7,1236.3" stroke="#9a9a9a" stroke-width="1.6"/><path d="M16.9,1236 V1257.8 M16.9,1238.3 H21 M16.9,1243.9 H21 M16.9,1250.5 H21" stroke="#9a9a9a" stroke-width="1.4" fill="none"/><path d="M22,1236.3 H25 L26,1237 H28.2 V1240 H22 Z" fill="#e2a23e"/><path d="M22,1242.2 H25 L26,1243 H28.2 V1246 H22 Z" fill="#e2a23e"/><rect x="29" y="1238.5" width="1.2" height="1.2" fill="#9a9a9a"/><rect x="32" y="1238.5" width="1.2" height="1.2" fill="#9a9a9a"/><rect x="35" y="1238.5" width="1.2" height="1.2" fill="#9a9a9a"/><text x="26.9" y="1263.7" font-family="Liberation Sans" font-size="19" fill="#9a9a9a" textLength="17" lengthAdjust="spacingAndGlyphs">ab</text><rect x="10" y="1282" width="2" height="2" fill="#76787a"/><rect x="16" y="1282" width="2" height="2" fill="#76787a"/><rect x="22" y="1282" width="2" height="2" fill="#76787a"/><rect x="28" y="1282" width="2" height="2" fill="#76787a"/><rect x="34" y="1282" width="2" height="2" fill="#76787a"/><rect x="40" y="1282" width="2" height="2" fill="#76787a"/><rect x="46" y="1282" width="2" height="2" fill="#76787a"/><rect x="52" y="1282" width="2" height="2" fill="#76787a"/><path d="M14,1327.9 L21.9,1316 L26.2,1320 Z" fill="#7a7a7a"/><rect x="28.5" y="1305.3" width="8" height="8" fill="#808080" transform="rotate(45 32.5 1309.3)"/><ellipse cx="29.2" cy="1313" rx="12" ry="5" transform="rotate(45 29.2 1313)" fill="url(#ping)"/><ellipse cx="38.1" cy="1304" rx="7.8" ry="3.4" transform="rotate(45 38.1 1304)" fill="url(#ping)"/><path d="M19.8,1351.6 L40.2,1372.6 M40.2,1351.6 L19.8,1372.6" stroke="#e0584c" stroke-width="4.6"/><rect x="11" y="1555" width="26" height="24" fill="none" stroke="#a0a0a0" stroke-width="1.6"/><rect x="17" y="1558" width="14" height="18" fill="#5e5e5e"/><path d="M15,1556 V1578 M33,1556 V1578" stroke="#a0a0a0" stroke-width="1.2"/><rect x="10" y="1580" width="28" height="2" fill="#a0a0a0"/><path d="M1640,1566 L1645.0,1560 L1650,1566 Z M1640,1570 L1645.0,1576 L1650,1570 Z" fill="#a8a8a8"/><path d="M1740,1566 L1745.0,1560 L1750,1566 Z M1740,1570 L1745.0,1576 L1750,1570 Z" fill="#a8a8a8"/><path d="M1902,1566 L1907.0,1560 L1912,1566 Z M1902,1570 L1907.0,1576 L1912,1570 Z" fill="#a8a8a8"/><path d="M1939,1568 V1563 A4,4 0 0 1 1947,1563 V1565" fill="none" stroke="#8a8a8a" stroke-width="2"/><rect x="1941" y="1566" width="14" height="12.5" rx="2" fill="#8a8a8a"/><path d="M1945,1570 H1951 M1948,1570 V1576" stroke="#3c3f41" stroke-width="1.6"/><path d="M1988,1566 V1560 Q1988,1554 1996,1554 Q2004,1554 2004,1560 V1566" fill="none" stroke="#8a8a8a" stroke-width="2.2"/><circle cx="1996" cy="1559.5" r="1.7" fill="#8a8a8a"/><rect x="1983" y="1565" width="26" height="2.2" fill="#8a8a8a"/><path d="M1987.5,1567 V1575 Q1987.5,1579 1991,1579 H2001 Q2004.5,1579 2004.5,1575 V1567 Z" fill="#8a8a8a"/><path d="M1990.5,1576.5 Q1996,1570.5 2001.5,1576.5" stroke="#3c3f41" stroke-width="1.8" fill="none"/><rect x="1989.5" y="1569" width="4.5" height="1.6" fill="#3c3f41"/><rect x="1998" y="1569" width="4.5" height="1.6" fill="#3c3f41"/><rect x="1987" y="1580" width="7" height="2" fill="#8a8a8a"/><rect x="1998" y="1580" width="7" height="2" fill="#8a8a8a"/><path d="M2046.5,1576.5 L2055.5,1582 L2049.5,1574.5" fill="#3c3f41" stroke="#8a8a8a" stroke-width="1.7" stroke-linejoin="round"/><ellipse cx="2039.5" cy="1566.5" rx="14.6" ry="12" fill="none" stroke="#8a8a8a" stroke-width="1.8"/><path d="M2046.2,1575.4 L2049.2,1573.8" stroke="#3c3f41" stroke-width="2.2"/></svg>
</body></html>
